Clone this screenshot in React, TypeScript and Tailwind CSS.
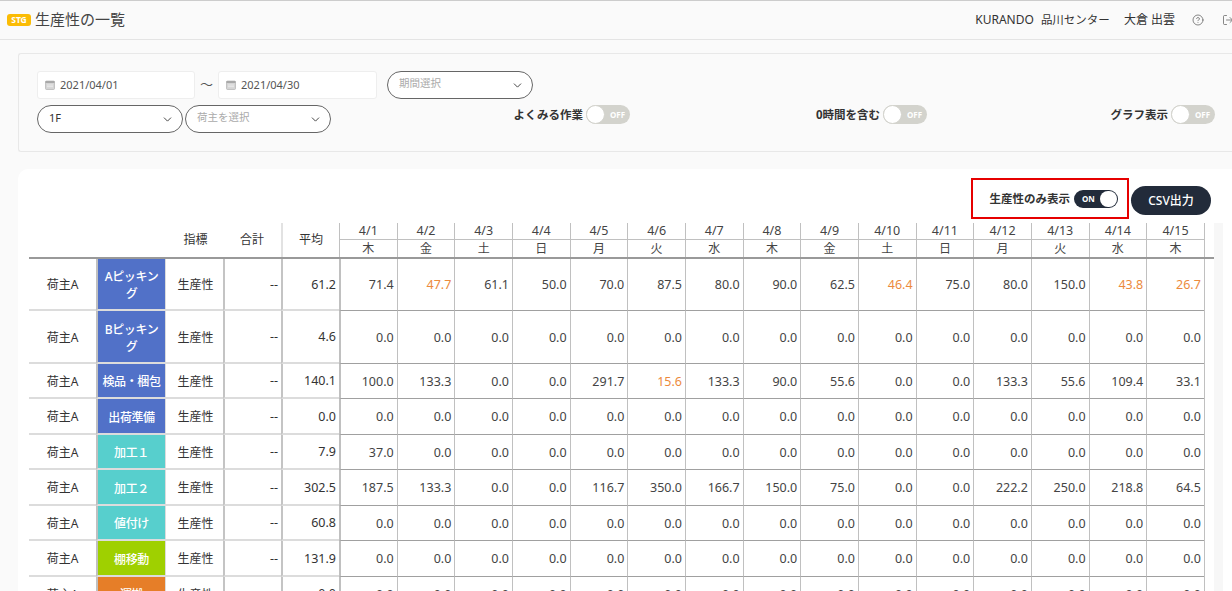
import { ChevronDown, CircleHelp, LogOut } from "lucide-react";

const fontStack = "font-['Noto_Sans','Noto_Sans_CJK_JP',sans-serif]";

const days = [
  ["4/1", "木"],
  ["4/2", "金"],
  ["4/3", "土"],
  ["4/4", "日"],
  ["4/5", "月"],
  ["4/6", "火"],
  ["4/7", "水"],
  ["4/8", "木"],
  ["4/9", "金"],
  ["4/10", "土"],
  ["4/11", "日"],
  ["4/12", "月"],
  ["4/13", "火"],
  ["4/14", "水"],
  ["4/15", "木"],
];

const zeros = Array(15).fill("0.0");

const rows = [
  {
    task: "Aピッキング",
    color: "bg-[#5171c8]",
    h: "h-[52px]",
    avg: "61.2",
    vals: ["71.4", "47.7", "61.1", "50.0", "70.0", "87.5", "80.0", "90.0", "62.5", "46.4", "75.0", "80.0", "150.0", "43.8", "26.7"],
    low: [1, 9, 13, 14],
  },
  { task: "Bピッキング", color: "bg-[#5171c8]", h: "h-[53px]", avg: "4.6", vals: zeros, low: [] },
  {
    task: "検品・梱包",
    color: "bg-[#5171c8]",
    h: "h-[35px]",
    avg: "140.1",
    vals: ["100.0", "133.3", "0.0", "0.0", "291.7", "15.6", "133.3", "90.0", "55.6", "0.0", "0.0", "133.3", "55.6", "109.4", "33.1"],
    low: [5],
  },
  { task: "出荷準備", color: "bg-[#5171c8]", h: "h-[36px]", avg: "0.0", vals: zeros, low: [] },
  {
    task: "加工１",
    color: "bg-[#57cfcd]",
    h: "h-[35px]",
    avg: "7.9",
    vals: ["37.0", ...zeros.slice(1)],
    low: [],
  },
  {
    task: "加工２",
    color: "bg-[#57cfcd]",
    h: "h-[36px]",
    avg: "302.5",
    vals: ["187.5", "133.3", "0.0", "0.0", "116.7", "350.0", "166.7", "150.0", "75.0", "0.0", "0.0", "222.2", "250.0", "218.8", "64.5"],
    low: [],
  },
  { task: "値付け", color: "bg-[#57cfcd]", h: "h-[35px]", avg: "60.8", vals: zeros, low: [] },
  { task: "棚移動", color: "bg-[#9fd000]", h: "h-[36px]", avg: "131.9", vals: zeros, low: [] },
  { task: "運搬", color: "bg-[#e67e28]", h: "h-[35px]", avg: "0.0", vals: zeros, low: [] },
];

function CalendarIcon() {
  return (
    <svg width="10" height="10" viewBox="0 0 10 10" className="shrink-0">
      <rect x="0.5" y="1" width="9" height="8.5" rx="1" fill="#d4d4d4" stroke="#a8a8a8" strokeWidth="0.6" />
      <rect x="0.5" y="1" width="9" height="2" fill="#a8a8a8" />
      <path d="M2 5h6M2 6.7h6" stroke="#f2f2f2" strokeWidth="0.7" />
    </svg>
  );
}

function DateInput({ value, width }: { value: string; width: string }) {
  return (
    <div className={`flex h-[28px] items-center gap-[5px] rounded-[3px] border border-[#eeeeee] bg-white pl-[7px] text-[11px] text-[#555] ${width}`}>
      <CalendarIcon />
      <span>{value}</span>
    </div>
  );
}

function Select({ text, width, placeholder }: { text: string; width: string; placeholder?: boolean }) {
  return (
    <div className={`flex h-[28px] shrink-0 items-center justify-between rounded-full border-[1.5px] border-[#666] bg-white pl-[11px] pr-[8px] ${width} ${placeholder ? "text-[10.5px] text-[#aaa]" : "text-[11px] text-[#333]"}`}>
      <span className="mt-[-2px]">{text}</span>
      <ChevronDown size={13} strokeWidth={1.8} className="text-[#444]" />
    </div>
  );
}

function Toggle({ label, width }: { label: string; width: string }) {
  return (
    <div className={`flex items-center justify-end gap-[3px] ${width}`}>
      <span className="mt-[1px] text-[11.5px] font-bold text-[#333]">{label}</span>
      <div className="flex h-[19px] w-[44px] items-center rounded-full bg-[#d3d3cd]">
        <div className="h-[19px] w-[19px] rounded-full border border-[#d3d3cd] bg-white" />
        <span className="ml-[5px] text-[8px] font-bold text-white">OFF</span>
      </div>
    </div>
  );
}

function Row({ row }: { row: (typeof rows)[number] }) {
  const left = "flex h-full items-center border-b-2 border-[#dcdcdc] pt-[2px] text-[#333]";
  return (
    <div className={`flex ${row.h}`}>
      <div className={`${left} w-[67px] justify-center text-[12px]`}>荷主A</div>
      <div className={`${left} w-[70px] justify-center border-l-2 border-r border-l-[#c0c0c0] border-r-[#dcdcdc] ${row.color} whitespace-pre-wrap px-[3px] text-center text-[12px] font-medium leading-[17px] tracking-[-0.4px] text-white`}>
        {row.task}
      </div>
      <div className={`${left} w-[57px] justify-center pl-[2px] text-[12px]`}>生産性</div>
      <div className={`${left} w-[58px] justify-end border-l-2 border-l-[#c4c4c4] pr-[3px] text-[12.5px]`}>--</div>
      <div className={`${left} w-[58px] justify-end border-l-2 border-l-[#c4c4c4] pr-[3px] text-[12.5px]`}>{row.avg}</div>
      {row.vals.map((v, i) => (
        <div
          key={i}
          className={`flex h-full w-[57.67px] items-center justify-end border-b border-l border-b-[#a0a0a0] border-l-[#c0c0c0] pr-[3px] pt-[2px] text-[12.5px] ${i === 0 ? "border-l-2" : ""} ${row.low.includes(i) ? "text-[#ec8a3c]" : "text-[#444]"}`}
        >
          {v}
        </div>
      ))}
      <div className="w-px bg-[#c0c0c0]" />
    </div>
  );
}

export default function App() {
  return (
    <div className={`h-[591px] w-[1232px] overflow-hidden bg-[#fafafa] ${fontStack}`}>
      <header className="flex h-[40px] items-center justify-between border-y border-t-[#cccccc] border-b-[#e4e4e4] pl-[7px] text-[#333]">
        <div className="flex items-center gap-[4px]">
          <span className="flex h-[12px] w-[24px] items-center justify-center rounded-[3px] bg-[#fbbc05] text-[8.5px] font-bold text-white">STG</span>
          <span className="mt-[-2px] text-[15px] text-[#444]">生産性の一覧</span>
        </div>
        <div className="flex items-center text-[#333]">
          <span className="text-[12px]">KURANDO</span>
          <span className="ml-[7px] text-[11.5px]">品川センター</span>
          <span className="ml-[14px] text-[12px]">大倉 出雲</span>
          <CircleHelp size={12} strokeWidth={1.4} className="ml-[17px] text-[#555]" />
          <div className="ml-[18px] w-[10px] overflow-hidden">
            <LogOut size={12} strokeWidth={1.4} className="text-[#555]" />
          </div>
        </div>
      </header>

      <section className="ml-[18px] mt-[13px] h-[99px] rounded-l-[3px] border border-r-0 border-[#e8e8e8] pl-[18px] pt-[17px]">
        <div className="flex items-center">
          <DateInput value="2021/04/01" width="w-[158px]" />
          <span className="w-[23px] text-center text-[13px] text-[#555]">〜</span>
          <DateInput value="2021/04/30" width="w-[159px]" />
          <div className="ml-[10px]">
            <Select text="期間選択" width="w-[146px]" placeholder />
          </div>
        </div>
        <div className="mt-[6px] flex items-start">
          <div className="flex gap-[2px]">
            <Select text="1F" width="w-[146px]" />
            <Select text="荷主を選択" width="w-[146px]" placeholder />
          </div>
          <Toggle label="よくみる作業" width="w-[299px]" />
          <Toggle label="0時間を含む" width="w-[297px]" />
          <Toggle label="グラフ表示" width="w-[288px]" />
        </div>
      </section>

      <section className="ml-[18px] mt-[17px] h-[500px] rounded-tl-[10px] bg-white pl-[11px]">
        <div className="flex h-[54px] items-start justify-end pr-[21px] pt-[9px]">
          <div className="flex h-[41px] w-[158px] items-center justify-end gap-[4px] border-2 border-[#e60000] pr-[9px]">
            <span className="text-[11.5px] font-semibold text-[#333]">生産性のみ表示</span>
            <div className="mt-[1px] flex h-[18px] w-[44px] items-center justify-between rounded-full bg-[#222b3a] pl-[8px] pr-px">
              <span className="text-[8px] font-bold text-white">ON</span>
              <div className="h-[16px] w-[17px] rounded-full bg-white" />
            </div>
          </div>
          <button className="ml-[2px] mt-[8px] h-[29px] w-[80px] rounded-full bg-[#222b3a] text-[12px] font-medium text-white">CSV出力</button>
        </div>

        <div className="flex">
          <div>
            <div className="flex h-[36px] border-b-2 border-[#999] text-[12px] text-[#333]">
              <div className="w-[137px]" />
              <div className="flex w-[57px] items-center justify-center pl-[2px]">指標</div>
              <div className="flex w-[58px] items-center justify-center">合計</div>
              <div className="flex w-[58px] items-center justify-center border-l-2 border-[#e2e2e2]">平均</div>
              {days.map(([d, w]) => (
                <div key={d} className="flex w-[57.67px] flex-col border-l border-[#c0c0c0] text-center text-[12.5px] text-[#444]">
                  <div className="h-[17px] border-b border-[#c0c0c0] leading-[16px]">{d}</div>
                  <div className="text-[12px] leading-[17px]">{w}</div>
                </div>
              ))}
              <div className="w-px bg-[#c0c0c0]" />
              <div className="w-[10px]" />
            </div>
            {rows.map((r, i) => (
              <Row key={i} row={r} />
            ))}
          </div>
          <div className="ml-[-1px] h-[400px] w-[9px] bg-[#f7f7f7]" />
        </div>
      </section>
    </div>
  );
}
